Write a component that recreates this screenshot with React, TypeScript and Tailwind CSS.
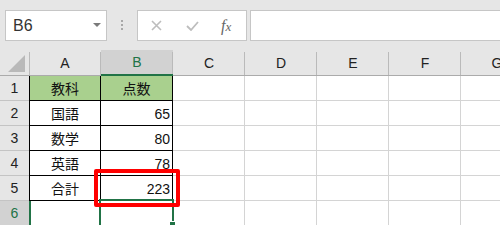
import React from "react";

const cols = ["A", "B", "C", "D", "E", "F", "G"];

type Row = { n: number; a?: string; b?: string; head?: boolean; table?: boolean; sel?: boolean };
const rows: Row[] = [
  { n: 1, a: "教科", b: "点数", head: true, table: true },
  { n: 2, a: "国語", b: "65", table: true },
  { n: 3, a: "数学", b: "80", table: true },
  { n: 4, a: "英語", b: "78", table: true },
  { n: 5, a: "合計", b: "223", table: true },
  { n: 6, sel: true },
];

const jp = { fontFamily: '"Noto Sans CJK JP", "Noto Sans", sans-serif' };
const ui = { fontFamily: '"Liberation Sans", Arial, sans-serif' };

export default function App() {
  return (
    <div className="relative w-[500px] h-[225px] overflow-hidden bg-white" style={ui}>
      {/* Toolbar */}
      <div className="flex h-[50px] items-start bg-[#e6e6e6] pt-[10px]">
        <div className="ml-[5px] flex h-[31px] w-[102px] shrink-0 items-center justify-between border border-[#c6c6c6] bg-white pl-[7px] pr-[5px]">
          <span className="text-[16px] text-[#333]">B6</span>
          <svg width="8" height="5" viewBox="0 0 8 5">
            <polygon points="0,0 8,0 4,4" fill="#7a7a7a" />
          </svg>
        </div>
        <div className="flex w-[30px] shrink-0 flex-col items-center gap-[2px] pt-[10px]">
          <div className="h-[2px] w-[2px] bg-[#a8a8a8]" />
          <div className="h-[2px] w-[2px] bg-[#a8a8a8]" />
          <div className="h-[2px] w-[2px] bg-[#a8a8a8]" />
        </div>
        <div className="flex h-[31px] w-[110px] shrink-0 items-center border border-[#c6c6c6] bg-white">
          <svg className="ml-[13px]" width="11" height="11" viewBox="0 0 11 11">
            <path d="M1 1 L10 10 M10 1 L1 10" stroke="#bdbdbd" strokeWidth="1.6" />
          </svg>
          <svg className="ml-[24px]" width="13" height="10" viewBox="0 0 13 10">
            <path d="M1 5 L5 9 L12 1" stroke="#bdbdbd" strokeWidth="1.8" fill="none" />
          </svg>
          <span
            className="ml-[22px] text-[16px] italic leading-none text-[#666]"
            style={{ fontFamily: '"Liberation Serif", "Times New Roman", serif' }}
          >
            f<span className="text-[13px]">x</span>
          </span>
        </div>
        <div className="ml-[3px] h-[31px] flex-1 border border-r-0 border-[#c6c6c6] bg-white" />
      </div>

      {/* Column header */}
      <div className="flex h-[26px] bg-[#e6e6e6]">
        <div className="relative w-[29px] shrink-0 border-b border-[#ababab]">
          <svg className="absolute left-[8px] top-[5px]" width="17" height="17" viewBox="0 0 17 17">
            <polygon points="17,0 17,17 0,17" fill="#b9b9b9" />
          </svg>
        </div>
        {cols.map((c, i) => {
          const sel = c === "B";
          return (
            <div
              key={c}
              className={`relative flex w-[72px] shrink-0 items-center justify-center pt-[1px] text-[14px] ${
                sel ? "border-b-2 border-[#217346] bg-[#d2d2d2] text-[#217346]" : "border-b border-[#ababab] text-[#222]"
              }`}
            >
              {i === 0 && <div className="absolute left-0 top-[2px] bottom-0 w-px bg-[#bababa]" />}
              <div className="absolute right-0 top-[2px] bottom-0 w-px bg-[#bababa]" />
              {c}
            </div>
          );
        })}
      </div>

      {/* Body */}
      {rows.map((r) => (
        <div key={r.n} className="flex h-[25px]">
          <div
            className={`flex w-[29px] shrink-0 items-center justify-center border-b border-[#c4c4c4] text-[14px] ${
              r.sel ? "bg-[#d2d2d2] text-[#217346]" : "bg-[#e6e6e6] text-[#222]"
            }`}
          >
            {r.n}
          </div>
          <div
            className={`flex w-[72px] shrink-0 items-center justify-center text-[14px] text-[#111] ${
              r.table
                ? "border-b border-l border-r border-black"
                : "border-b border-l-2 border-r border-b-[#d4d4d4] border-l-[#217346] border-r-[#d4d4d4]"
            } ${r.head ? "bg-[#a9d08e]" : ""}`}
            style={jp}
          >
            {r.a}
          </div>
          <div
            className={`flex w-[72px] shrink-0 items-center text-[14px] text-[#111] ${
              r.table ? "border-b border-r border-black" : "border-b border-r border-[#d4d4d4]"
            } ${r.head ? "justify-center bg-[#a9d08e]" : "justify-end pr-[2px] pt-[2px]"}`}
            style={r.head ? jp : ui}
          >
            {r.b}
          </div>
          {cols.slice(2).map((c) => (
            <div key={c} className="w-[72px] shrink-0 border-b border-r border-[#d4d4d4]" />
          ))}
        </div>
      ))}

      {/* Selection B6 */}
      <div className="absolute left-[99px] top-[199px] h-[30px] w-[75px] border-2 border-[#217346]" />
      <div className="absolute left-[169px] top-[221px] h-[7px] w-[7px] border border-white bg-[#217346]" />

      {/* Red highlight */}
      <div className="absolute left-[94px] top-[169px] h-[38px] w-[86px] rounded-[2px] border-4 border-[#ff0000]" />
    </div>
  );
}
